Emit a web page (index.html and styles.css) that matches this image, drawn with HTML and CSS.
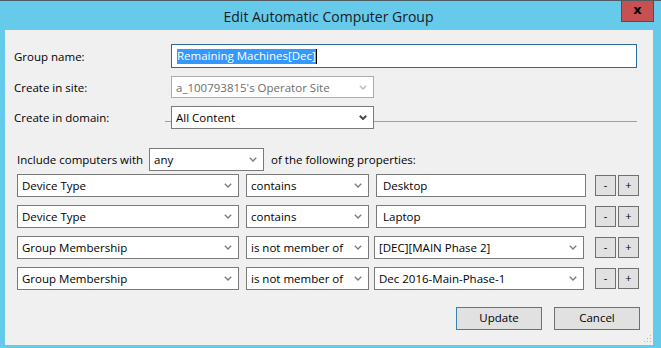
FILE: index.html
```html
<!DOCTYPE html>
<html lang="en">
<head>
    <meta charset="UTF-8">
    <title>Edit Automatic Computer Group</title>
    <link rel="stylesheet" href="styles.css">
</head>
<body>
    <div class="window">
        <div class="titlebar">
            <span class="title">Edit Automatic Computer Group</span>
            <div class="close">x</div>
        </div>
        <div class="client">
            <div class="row">
                <label class="label">Group name:</label>
                <div class="textbox focused"><span class="sel">Remaining Machines[Dec]</span><span class="caret"></span></div>
            </div>
            <div class="row site">
                <label class="label">Create in site:</label>
                <div class="combo disabled w-site">
                    <span>a_100793815's Operator Site</span>
                    <svg width="8" height="5" viewBox="0 0 8 5"><polyline points="0.8,0.8 4,4 7.2,0.8"/></svg>
                </div>
            </div>
            <div class="row domain">
                <label class="label">Create in domain:</label>
                <div class="domain-field">
                    <div class="rule short"></div>
                    <div class="combo dark w-site">
                        <span>All Content</span>
                        <svg width="8" height="5" viewBox="0 0 8 5"><polyline points="0.8,0.8 4,4 7.2,0.8"/></svg>
                    </div>
                    <div class="rule long"></div>
                </div>
            </div>

            <div class="row include">
                <span>Include computers with</span>
                <div class="combo w-any">
                    <span>any</span>
                    <svg width="8" height="5" viewBox="0 0 8 5"><polyline points="0.8,0.8 4,4 7.2,0.8"/></svg>
                </div>
                <span>of the following properties:</span>
            </div>

            <div class="conditions">
                <div class="cond">
                    <div class="combo w-prop"><span>Device Type</span><svg width="8" height="5" viewBox="0 0 8 5"><polyline points="0.8,0.8 4,4 7.2,0.8"/></svg></div>
                    <div class="combo w-op"><span>contains</span><svg width="8" height="5" viewBox="0 0 8 5"><polyline points="0.8,0.8 4,4 7.2,0.8"/></svg></div>
                    <div class="textbox value">Desktop</div>
                    <div class="mini minus">-</div>
                    <div class="mini">+</div>
                </div>
                <div class="cond">
                    <div class="combo w-prop"><span>Device Type</span><svg width="8" height="5" viewBox="0 0 8 5"><polyline points="0.8,0.8 4,4 7.2,0.8"/></svg></div>
                    <div class="combo w-op"><span>contains</span><svg width="8" height="5" viewBox="0 0 8 5"><polyline points="0.8,0.8 4,4 7.2,0.8"/></svg></div>
                    <div class="textbox value">Laptop</div>
                    <div class="mini minus">-</div>
                    <div class="mini">+</div>
                </div>
                <div class="cond">
                    <div class="combo w-prop"><span>Group Membership</span><svg width="8" height="5" viewBox="0 0 8 5"><polyline points="0.8,0.8 4,4 7.2,0.8"/></svg></div>
                    <div class="combo w-op"><span>is not member of</span><svg width="8" height="5" viewBox="0 0 8 5"><polyline points="0.8,0.8 4,4 7.2,0.8"/></svg></div>
                    <div class="combo value-combo"><span>[DEC][MAIN Phase 2]</span><svg width="8" height="5" viewBox="0 0 8 5"><polyline points="0.8,0.8 4,4 7.2,0.8"/></svg></div>
                    <div class="mini minus wide-gap">-</div>
                    <div class="mini">+</div>
                </div>
                <div class="cond">
                    <div class="combo w-prop"><span>Group Membership</span><svg width="8" height="5" viewBox="0 0 8 5"><polyline points="0.8,0.8 4,4 7.2,0.8"/></svg></div>
                    <div class="combo w-op"><span>is not member of</span><svg width="8" height="5" viewBox="0 0 8 5"><polyline points="0.8,0.8 4,4 7.2,0.8"/></svg></div>
                    <div class="combo value-combo"><span>Dec 2016-Main-Phase-1</span><svg width="8" height="5" viewBox="0 0 8 5"><polyline points="0.8,0.8 4,4 7.2,0.8"/></svg></div>
                    <div class="mini minus wide-gap">-</div>
                    <div class="mini">+</div>
                </div>
            </div>

            <div class="footer">
                <div class="btn default">Update</div>
                <div class="btn">Cancel</div>
            </div>

            <!-- size grip -->
            <svg class="grip" width="9" height="9" viewBox="0 0 9 9">
                <rect x="7" y="1" width="1" height="1"/>
                <rect x="4" y="4" width="1" height="1"/>
                <rect x="7" y="4" width="1" height="1"/>
                <rect x="1" y="7" width="1" height="1"/>
                <rect x="4" y="7" width="1" height="1"/>
                <rect x="7" y="7" width="1" height="1"/>
            </svg>
        </div>
    </div>
</body>
</html>
```

FILE: styles.css
```css
body {
    margin: 0;
    padding: 0;
    font-family: "Open Sans", "Noto Sans", sans-serif;
    font-size: 11.5px;
    color: #000;
}

.window {
    width: 661px;
    height: 348px;
    background-color: #66cbea;
    border-top: 1px solid #4f5b60;
    box-sizing: border-box;
    position: relative;
}

.titlebar {
    height: 29px;
    display: flex;
    justify-content: center;
    align-items: center;
}

.title {
    font-size: 14px;
    color: #1a1a1a;
    margin-left: -4px;
    margin-top: 1px;
}

.close {
    position: absolute;
    top: 0;
    right: 7px;
    width: 33px;
    height: 21px;
    box-sizing: border-box;
    background-color: #c75050;
    border: 1px solid #7f3a3a;
    border-top: none;
    color: #000;
    font-family: "DejaVu Sans", sans-serif;
    font-weight: bold;
    font-size: 13px;
    line-height: 17px;
    text-align: center;
}

.client {
    position: relative;
    margin: 0 8px 0 5px;
    height: 315px;
    box-sizing: border-box;
    padding: 14px 13px 0 9px;
    background-color: #f0f0f0;
}

.row {
    display: flex;
    align-items: center;
    height: 24px;
}

.row.site {
    margin-top: 8px;
    height: 22px;
}

.row.domain {
    margin-top: 8px;
    height: 23px;
    align-items: flex-start;
}

.row.domain .label {
    align-self: center;
}

.label {
    width: 157px;
    flex: none;
}

.textbox {
    height: 100%;
    box-sizing: border-box;
    background-color: #fff;
    border: 1px solid #7a7a7a;
    display: flex;
    align-items: center;
    padding-left: 6px;
    white-space: nowrap;
}

.textbox.focused {
    flex: 1;
    margin-right: 3px;
    border-color: #2c6a9c;
    padding-left: 5px;
}

.sel {
    background-color: #3399ff;
    color: #fff;
    line-height: 14px;
    padding-bottom: 1px;
}

.caret {
    width: 1px;
    height: 15px;
    background-color: #000;
}

.combo {
    height: 100%;
    box-sizing: border-box;
    background-color: #fff;
    border: 1px solid #7a7a7a;
    display: flex;
    align-items: center;
    justify-content: space-between;
    padding: 0 6px 0 4px;
    white-space: nowrap;
    flex: none;
}

.combo svg polyline {
    fill: none;
    stroke: #7c7c7c;
    stroke-width: 1.4;
}

.combo.dark svg polyline {
    stroke: #4a4a4a;
    stroke-width: 2;
}

.combo.disabled {
    border-color: #adadad;
    color: #6d6d6d;
}

.combo.disabled svg polyline {
    stroke: #bcbcbc;
}

.w-site {
    width: 203px;
    height: 22px;
}

.domain-field {
    display: flex;
    flex: 1;
    margin-left: -6px;
    margin-right: 3px;
    height: 23px;
}

.domain-field .combo {
    height: 23px;
}

.rule {
    height: 1px;
    margin-top: 15px;
    background-color: #a0a0a0;
}

.rule.short {
    width: 6px;
}

.rule.long {
    flex: 1;
}

.row.include {
    margin-top: 19px;
    margin-left: 3px;
    height: 23px;
}

.w-any {
    width: 115px;
    margin: 0 7px 0 6px;
}

.conditions {
    margin: 3px 0 0 3px;
    display: flex;
    flex-direction: column;
    gap: 8px;
}

.cond {
    display: flex;
    align-items: flex-start;
    height: 23px;
}

.cond > .combo,
.cond > .textbox {
    height: 23px;
}

.w-prop {
    width: 222px;
}

.w-op {
    width: 123px;
    margin-left: 7px;
}

.textbox.value {
    width: 210px;
    margin-left: 7px;
}

.combo.value-combo {
    width: 210px;
    margin-left: 5px;
}

.mini {
    width: 21px;
    height: 21px;
    margin-top: 1px;
    box-sizing: border-box;
    background-color: #e1e1e1;
    border: 1px solid #707070;
    text-align: center;
    line-height: 18px;
    font-size: 11px;
}

.mini.minus {
    margin-left: 9px;
    margin-right: 2px;
}

.mini.minus.wide-gap {
    margin-left: 11px;
}

.footer {
    display: flex;
    justify-content: flex-end;
    gap: 12px;
    margin-top: 17px;
}

.btn {
    width: 86px;
    height: 23px;
    box-sizing: border-box;
    background-color: #e1e1e1;
    border: 1px solid #707070;
    text-align: center;
    line-height: 20px;
    font-size: 11.5px;
}

.btn.default {
    border-color: #3c7fb1;
}

.grip {
    position: absolute;
    right: 1px;
    bottom: 2px;
    fill: #b5b5b5;
}
```
